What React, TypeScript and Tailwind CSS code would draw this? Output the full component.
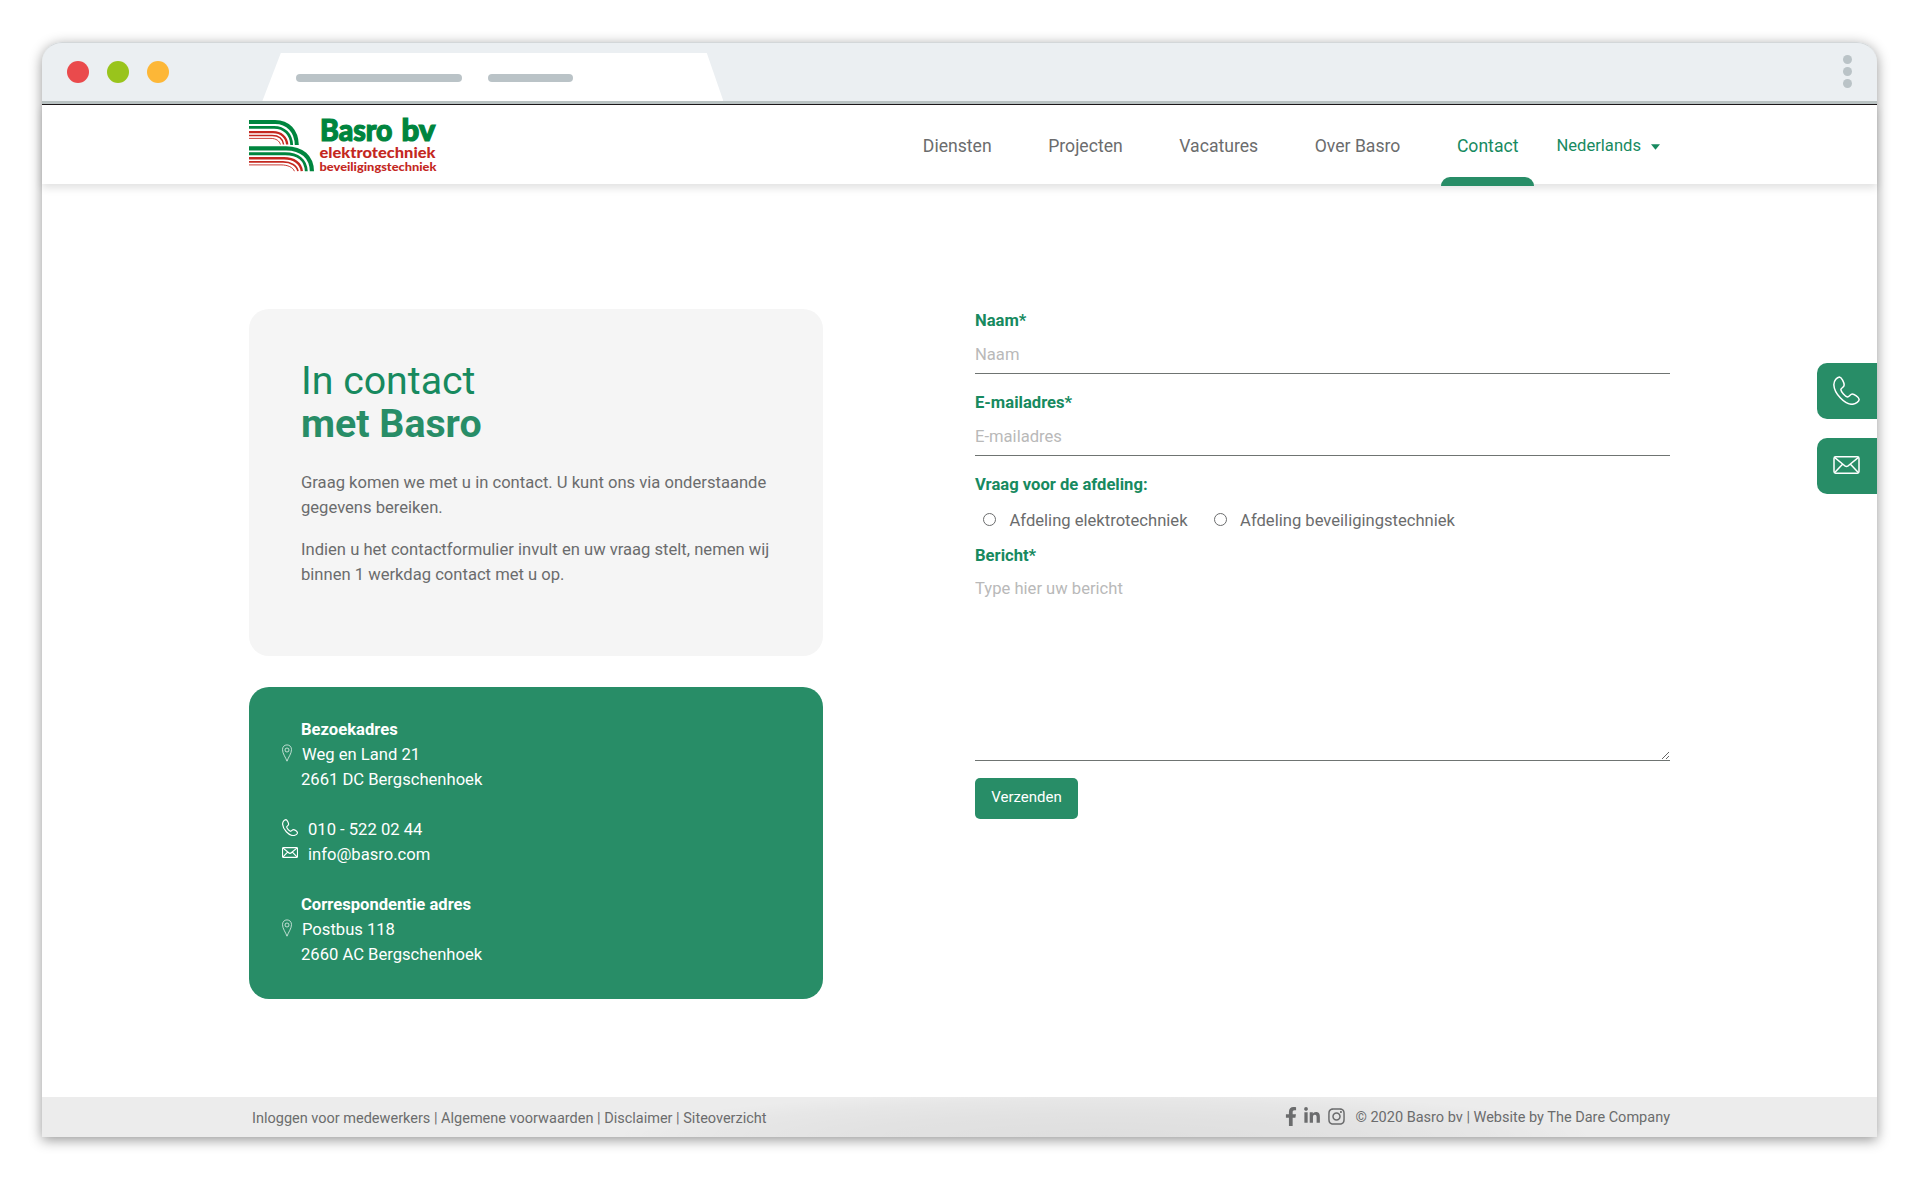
import { FormEvent, useState } from "react";
import { FaFacebookF, FaInstagram, FaLinkedinIn } from "react-icons/fa";

const navItems = ["Diensten", "Projecten", "Vacatures", "Over Basro"];

const departments = ["Afdeling elektrotechniek", "Afdeling beveiligingstechniek"];

type IconProps = { className?: string; strokeWidth?: number };

function PhoneIcon({ className, strokeWidth = 4.5 }: IconProps) {
  return (
    <svg viewBox="0 0 80 87" fill="none" className={className}>
      <path
        d="M19 3C12 4 2 13 2 26C3 52 34 85 57 85C69 84 78 76 78 70C77 63 63 54 57 54C52 54 48 63 43 63C36 61 24 48 23 41C23 36 33 34 33 27C33 20 25 3 19 3Z"
        stroke="currentColor"
        strokeWidth={strokeWidth}
        strokeLinejoin="round"
      />
    </svg>
  );
}

function MailIcon({ className, strokeWidth = 4.5 }: IconProps) {
  return (
    <svg viewBox="0 0 80 54" fill="none" className={className}>
      <g stroke="currentColor" strokeWidth={strokeWidth} strokeLinejoin="round">
        <rect x="2.5" y="2.5" width="75" height="49" rx="5" />
        <path d="M4 4L32 27Q40 36 48 27L76 4M4 50L28 25M76 50L52 25" />
      </g>
    </svg>
  );
}

function PinIcon({ className }: IconProps) {
  return (
    <svg viewBox="0 0 10 18" fill="none" className={className}>
      <path
        d="M5 17.2C3.6 13.2 0.5 9.6 0.5 5.6C0.5 2.8 2.4 0.9 5 0.9S9.5 2.8 9.5 5.6C9.5 9.6 6.4 13.2 5 17.2Z"
        stroke="currentColor"
        strokeWidth="0.7"
      />
      <circle cx="5" cy="6" r="2" stroke="currentColor" strokeWidth="0.7" />
    </svg>
  );
}

function Logo() {
  return (
    <svg width="190" height="74" viewBox="249 106 190 74">
      <g fill="none" stroke="#00853e">
        <path d="M249 122H275C288 122 296.5 131 296.8 145" strokeWidth="4" />
        <path d="M249 127.3H274C284 127.3 291.3 134 291.7 145" strokeWidth="2.8" />
        <path d="M249 148.3H286C302 148.3 311.6 157 311.9 171.2" strokeWidth="4.2" />
        <path d="M249 153.7H285C298 153.7 305.8 160 306.3 171.2" strokeWidth="2.9" />
      </g>
      <g fill="none" stroke="#c4281f">
        <path d="M249 132.2H273C281 132.2 286.6 137 287.2 144.5" strokeWidth="2.3" />
        <path d="M249 135.6H272C279 135.6 282.8 139 283.6 144.5" strokeWidth="1.5" />
        <path d="M249 138.4H271C276 138.4 279.6 141 280.4 144.5" strokeWidth="0.9" />
        <path d="M249 158.3H284C294 158.3 301 163 301.8 171.2" strokeWidth="2.4" />
        <path d="M249 161.9H283C291 161.9 297 165.6 298 171.2" strokeWidth="1.6" />
        <path d="M249 164.9H281C288 164.9 293 167.4 294.4 171.2" strokeWidth="0.9" />
      </g>
      <g className="font-['Lato']">
        <g fill="#00853e" stroke="#00853e" strokeWidth="1.2" fontSize="30.5" fontWeight="900">
          <text x="320" y="141.2" textLength="72.5" lengthAdjust="spacingAndGlyphs">
            Basro
          </text>
          <text x="401.5" y="141.2" textLength="34" lengthAdjust="spacingAndGlyphs">
            bv
          </text>
        </g>
        <g fill="#c4281f" fontWeight="900">
          <text x="319.5" y="158.2" fontSize="15.6" textLength="116" lengthAdjust="spacingAndGlyphs">
            elektrotechniek
          </text>
          <text x="319.5" y="171.4" fontSize="12" textLength="117" lengthAdjust="spacingAndGlyphs">
            beveiligingstechniek
          </text>
        </g>
      </g>
    </svg>
  );
}

function BrowserBar() {
  return (
    <div className="flex h-[63px] items-start justify-between rounded-t-[20px] border-t border-[#d3d7d9] bg-[#ebeff2]">
      <div className="flex">
        <div className="flex gap-[18.2px] pl-[25px] pt-[18px]">
          <span className="size-[22px] rounded-full bg-[#ea4a4c]" />
          <span className="size-[22px] rounded-full bg-[#99c41c]" />
          <span className="size-[22px] rounded-full bg-[#fdb737]" />
        </div>
        <div className="ml-[93px] mt-[10px] flex h-[48px] w-[461px] gap-[26px] bg-white pl-[34px] pt-[21px] [clip-path:polygon(4%_0,96.4%_0,100%_100%,0_100%)]">
          <span className="h-2 w-[166px] rounded-full bg-[#bac3c7]" />
          <span className="h-2 w-[85px] rounded-full bg-[#bac3c7]" />
        </div>
      </div>
      <div className="flex flex-col gap-[3px] pr-[25px] pt-[12px]">
        <span className="size-[9px] rounded-full bg-[#bac3c7]" />
        <span className="size-[9px] rounded-full bg-[#bac3c7]" />
        <span className="size-[9px] rounded-full bg-[#bac3c7]" />
      </div>
    </div>
  );
}

function Header() {
  return (
    <header className="h-[79px] bg-white shadow-[0_4px_8px_rgba(0,0,0,0.12)]">
      <div className="mx-auto flex h-full w-[1421px] justify-between">
        <div className="pt-px">
          <Logo />
        </div>
        <nav className="flex pr-[10px] text-[17.6px] leading-[25px] text-[#6b6c6d]">
          {navItems.map((item) => (
            <a key={item} className="mr-[24.6px] px-4 pt-[29px]">
              {item}
            </a>
          ))}
          <a className="relative px-4 pt-[29px] text-[#178a5f]">
            Contact
            <span className="absolute inset-x-0 -bottom-[2px] h-[9px] rounded-t-[9px] bg-[#288d67]" />
          </a>
          <button className="ml-[22px] flex items-start pt-[28px] text-[16.6px] text-[#178a5f]">
            Nederlands
            <svg viewBox="0 0 9 6" className="ml-[10px] mt-[11px] h-[6px] w-[9px]">
              <path d="M0 0.3H9L4.5 5.7Z" fill="currentColor" />
            </svg>
          </button>
        </nav>
      </div>
    </header>
  );
}

function Intro() {
  return (
    <section className="h-[347px] rounded-[20px] bg-[#f5f5f5] px-[52px] pt-[51px]">
      <h1 className="text-[39.3px] leading-[43px] text-[#178a5f]">
        In contact
        <br />
        <span className="font-bold text-[#288d67]">met Basro</span>
      </h1>
      <div className="mt-[24px] space-y-[16.6px] text-[16.6px] leading-[25px] text-[#6b6c6d]">
        <p>
          Graag komen we met u in contact. U kunt ons via onderstaande
          <br />
          gegevens bereiken.
        </p>
        <p>
          Indien u het contactformulier invult en uw vraag stelt, nemen wij
          <br />
          binnen 1 werkdag contact met u op.
        </p>
      </div>
    </section>
  );
}

function Address({ title, line, city }: { title: string; line: string; city: string }) {
  return (
    <div className="pl-[19px]">
      <p className="font-bold">{title}</p>
      <p className="-ml-[19px] flex">
        <PinIcon className="mr-[10px] mt-[2px] h-[18px] w-[10px]" />
        {line}
      </p>
      <p>{city}</p>
    </div>
  );
}

function ContactDetails() {
  return (
    <section className="mt-[31px] flex h-[312px] flex-col gap-[25px] rounded-[20px] bg-[#288d67] pl-[33px] pt-[30px] text-[16.6px] leading-[25px] text-white">
      <Address title="Bezoekadres" line="Weg en Land 21" city="2661 DC Bergschenhoek" />
      <div>
        <p className="flex">
          <PhoneIcon strokeWidth={6} className="mr-[10px] mt-[2px] h-[17px] w-[16px]" />
          010 - 522 02 44
        </p>
        <p className="flex">
          <MailIcon strokeWidth={6} className="mr-[10px] mt-[5px] h-[11px] w-[16px]" />
          info@basro.com
        </p>
      </div>
      <Address title="Correspondentie adres" line="Postbus 118" city="2660 AC Bergschenhoek" />
    </section>
  );
}

function ContactForm() {
  const [department, setDepartment] = useState("");

  const handleSubmit = (event: FormEvent<HTMLFormElement>) => {
    event.preventDefault();
  };

  const labelClass = "block font-bold text-[#178a5f]";
  const fieldClass =
    "block w-full border-b border-[#6f7472] bg-transparent outline-none placeholder:text-[#b9b9b9]";

  return (
    <form
      onSubmit={handleSubmit}
      className="-mt-px w-[695px] text-[16.6px] leading-[25px] text-[#6b6c6d]"
    >
      <label htmlFor="naam" className={labelClass}>
        Naam*
      </label>
      <input id="naam" placeholder="Naam" className={`${fieldClass} mb-4 h-[41px] pt-[2px]`} />

      <label htmlFor="email" className={labelClass}>
        E-mailadres*
      </label>
      <input id="email" placeholder="E-mailadres" className={`${fieldClass} mb-4 h-[41px] pt-[2px]`} />

      <p className={labelClass}>Vraag voor de afdeling:</p>
      <div className="mb-[10px] mt-[11px] flex gap-[26px] pl-2">
        {departments.map((name) => (
          <label key={name} className="flex">
            <input
              type="radio"
              name="afdeling"
              checked={department === name}
              onChange={() => setDepartment(name)}
              className="mr-[13.5px] mt-[5px] size-[13px] appearance-none rounded-full border border-[#6b6c6d] checked:bg-[#288d67]"
            />
            {name}
          </label>
        ))}
      </div>

      <label htmlFor="bericht" className={labelClass}>
        Bericht*
      </label>
      <textarea
        id="bericht"
        placeholder="Type hier uw bericht"
        className={`${fieldClass} h-[193px] resize-y pt-[8px]`}
      />

      <button
        type="submit"
        className="mt-[17px] h-[41px] w-[103px] rounded-[5px] bg-[#288d67] pb-[2px] text-[15px] text-white"
      >
        Verzenden
      </button>
    </form>
  );
}

function Footer() {
  return (
    <footer className="h-[40px] bg-[#ececec] bg-[radial-gradient(ellipse_490px_46px_at_1063px_100%,rgba(0,0,0,0.06)_0%,rgba(0,0,0,0.045)_50%,rgba(0,0,0,0.025)_80%,transparent_100%)] text-[14.5px] leading-[20px] text-[#6b6c6d]">
      <div className="mx-auto flex h-full w-[1421px] justify-between">
        <p className="pl-[3px] pt-[12px]">
          Inloggen voor medewerkers | Algemene voorwaarden | Disclaimer | Siteoverzicht
        </p>
        <div className="flex pt-[11px]">
          <FaFacebookF className="-mt-px mr-[6px] h-[19px] w-[12px]" />
          <FaLinkedinIn className="-mt-[1px] mr-[6px] size-[18px]" />
          <FaInstagram className="-mt-px mr-[9px] size-[19px]" />
          <p>© 2020 Basro bv | Website by The Dare Company</p>
        </div>
      </div>
    </footer>
  );
}

export default function App() {
  return (
    <div className="h-[1180px] w-[1920px] overflow-hidden bg-white pl-[42px] pt-[42px] font-['Roboto',sans-serif]">
      <div className="relative flex h-[1095px] w-[1835px] flex-col rounded-t-[20px] bg-white shadow-[0_3px_13px_rgba(0,0,0,0.42)]">
        <div className="h-[63px]">
          <BrowserBar />
          <div className="relative -mt-[4px] h-[4px] border-b border-[#1c1719] bg-[#b9c2c2]" />
        </div>
        <Header />
        <main className="mx-auto flex w-[1421px] grow justify-between pt-[125px]">
          <div className="w-[574px]">
            <Intro />
            <ContactDetails />
          </div>
          <ContactForm />
        </main>
        <Footer />

        <div className="absolute right-0 top-[321px] flex flex-col gap-[19px] text-white">
          <a className="flex h-[56px] w-[60px] rounded-l-[10px] bg-[#288d67] pl-4 pt-[13px]">
            <PhoneIcon className="h-[29px] w-[27px]" />
          </a>
          <a className="flex h-[56px] w-[60px] rounded-l-[10px] bg-[#288d67] pl-4 pt-[18px]">
            <MailIcon className="h-[18px] w-[27px]" />
          </a>
        </div>
      </div>
    </div>
  );
}
